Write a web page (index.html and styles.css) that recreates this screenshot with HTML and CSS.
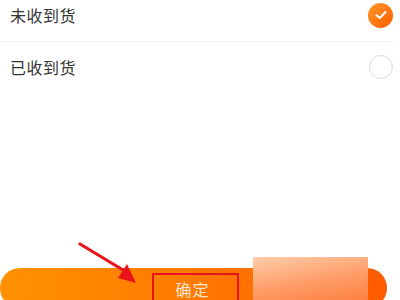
FILE: index.html
```html
<!DOCTYPE html>
<html>
<head>
<meta charset="utf-8">
<link rel="stylesheet" href="styles.css">
</head>
<body>
<div class="page">
  <div class="list">
    <div class="row row-first">
      <span class="label">未收到货</span>
      <span class="radio checked">
        <svg width="14" height="14" viewBox="0 0 14 14"><path d="M2.5 7.2 L5.8 10 L11.5 4" fill="none" stroke="#fff" stroke-width="2" stroke-linecap="round" stroke-linejoin="round"/></svg>
      </span>
    </div>
    <div class="row row-second">
      <span class="label">已收到货</span>
      <span class="radio"></span>
    </div>
  </div>
  <div class="footer">
    <div class="btn"><span class="btn-text">确定</span></div>
    <div class="mark-box"></div>
    <div class="blur-patch"></div>
    <svg class="arrow" width="80" height="50" viewBox="0 0 80 50">
      <line x1="2" y1="2" x2="50" y2="31" stroke="#e8141c" stroke-width="3.2" stroke-linecap="round"/>
      <polygon points="58,41 40,36 49,22" fill="#e8141c"/>
    </svg>
  </div>
</div>
</body>
</html>
```
FILE: styles.css
```css
html, body {
  margin: 0;
  padding: 0;
  background: #fff;
}
.page {
  width: 400px;
  height: 300px;
  overflow: hidden;
  position: relative;
  font-family: "Noto Sans CJK SC", "Noto Sans", sans-serif;
}
.list {
  height: 268px;
}
.row {
  display: flex;
  align-items: center;
  justify-content: space-between;
  padding-left: 10px;
  width: 383px;
}
.row-first {
  height: 30px;
  padding-bottom: 11px;
  border-bottom: 1px solid #eeeeee;
}
.row-second {
  height: 24px;
  padding-top: 13px;
}
.label {
  font-size: 16px;
  color: #333;
  letter-spacing: 0.5px;
}
.radio {
  width: 22px;
  height: 22px;
  border-radius: 50%;
  border: 1.5px solid #dcdcdc;
  box-sizing: content-box;
  display: flex;
  align-items: center;
  justify-content: center;
}
.radio.checked {
  width: 25px;
  height: 25px;
  border: none;
  background: linear-gradient(135deg, #ff9a2a, #ff5a00);
}
.footer {
  position: relative;
  height: 32px;
}
.btn {
  width: 387px;
  height: 40px;
  border-radius: 20px;
  background: linear-gradient(90deg, #ff9100 0%, #ff7c00 45%, #ff5c00 100%);
  display: flex;
  justify-content: center;
  padding-top: 11px;
  box-sizing: border-box;
}
.btn-text {
  color: #ffe7cf;
  font-size: 16px;
  line-height: 20px;
  letter-spacing: 1px;
  padding-right: 2px;
}
.mark-box {
  position: absolute;
  left: 152px;
  top: 5px;
  width: 83px;
  height: 40px;
  border: 2px solid #e8141c;
}
.blur-patch {
  position: absolute;
  left: 253px;
  top: -11px;
  width: 115px;
  height: 50px;
  background: linear-gradient(170deg, #ffcdaa 0%, #ff9c68 50%, #ff7a38 100%);
}
.arrow {
  position: absolute;
  left: 78px;
  top: -26px;
}
```
